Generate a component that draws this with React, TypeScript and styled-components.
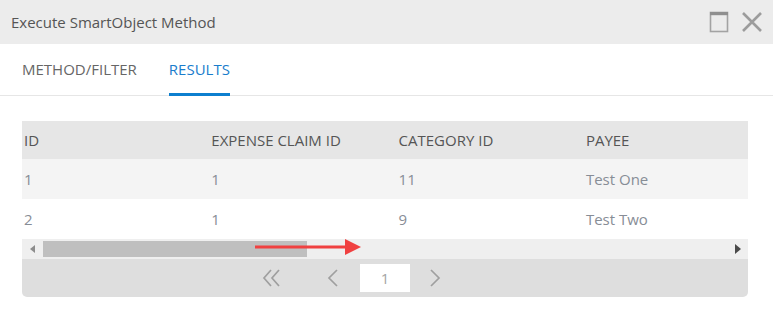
import React, { useState } from "react";
import styled, { createGlobalStyle } from "styled-components";

interface Column {
  key: string;
  title: string;
}

const columns: Column[] = [
  { key: "id", title: "ID" },
  { key: "claimId", title: "EXPENSE CLAIM ID" },
  { key: "categoryId", title: "CATEGORY ID" },
  { key: "payee", title: "PAYEE" },
];

const rows: Record<string, string>[] = [
  { id: "1", claimId: "1", categoryId: "11", payee: "Test One" },
  { id: "2", claimId: "1", categoryId: "9", payee: "Test Two" },
];

const tabs = ["METHOD/FILTER", "RESULTS"];

function App() {
  const [activeTab, setActiveTab] = useState(1);

  return (
    <>
      <GlobalStyle />
      <Dialog>
        <TitleBar>
          <Title>Execute SmartObject Method</Title>
          <TitleButtons>
            <IconButton aria-label="maximize">
              <svg width="20" height="22" viewBox="0 0 20 22">
                <rect x="1.5" y="1.5" width="17" height="19" fill="none" stroke="#a3a3a3" strokeWidth="1.6" />
                <rect x="1" y="1" width="18" height="3.2" fill="#8f8f8f" />
              </svg>
            </IconButton>
            <IconButton aria-label="close">
              <svg width="22" height="20" viewBox="0 0 22 20">
                <path d="M2 1 L20 19 M20 1 L2 19" stroke="#9c9c9c" strokeWidth="2.6" />
              </svg>
            </IconButton>
          </TitleButtons>
        </TitleBar>

        <TabBar>
          {tabs.map((tab, index) => (
            <Tab key={tab} $active={activeTab === index} onClick={() => setActiveTab(index)}>
              {tab}
            </Tab>
          ))}
        </TabBar>

        <Content>
          <Grid>
            <TableViewport>
              <Table>
                <thead>
                  <tr>
                    {columns.map((col) => (
                      <HeadCell key={col.key}>{col.title}</HeadCell>
                    ))}
                  </tr>
                </thead>
                <tbody>
                  {rows.map((row, index) => (
                    <BodyRow key={index} $striped={index % 2 === 0}>
                      {columns.map((col) => (
                        <BodyCell key={col.key}>{row[col.key]}</BodyCell>
                      ))}
                    </BodyRow>
                  ))}
                </tbody>
              </Table>
            </TableViewport>

            <ScrollBar>
              <ScrollArrow>
                <svg width="6" height="8" viewBox="0 0 6 8">
                  <path d="M5 0 L0 4 L5 8 Z" fill="#8c8c8c" />
                </svg>
              </ScrollArrow>
              <Track>
                <Thumb style={{ width: "38.6%" }} />
                <Annotation>
                  <svg width="106" height="16" viewBox="0 0 106 16">
                    <rect x="0" y="6.5" width="92" height="3" fill="#f04141" />
                    <path d="M90 0 L106 8 L90 16 Z" fill="#f04141" />
                  </svg>
                </Annotation>
              </Track>
              <ScrollArrow>
                <svg width="6" height="10" viewBox="0 0 6 10">
                  <path d="M0 0 L6 5 L0 10 Z" fill="#4a4a4a" />
                </svg>
              </ScrollArrow>
            </ScrollBar>

            <Pager>
              <PagerButton $width={20} $gap={45} aria-label="first page">
                <svg width="20" height="18" viewBox="0 0 20 18">
                  <path d="M9 1 L2 9 L9 17 M17 1 L10 9 L17 17" fill="none" stroke="#9f9f9f" strokeWidth="1.7" />
                </svg>
              </PagerButton>
              <PagerButton $width={11} $gap={22} aria-label="previous page">
                <svg width="11" height="18" viewBox="0 0 11 18">
                  <path d="M10 1 L2 9 L10 17" fill="none" stroke="#9f9f9f" strokeWidth="1.7" />
                </svg>
              </PagerButton>
              <PageInput value="1" readOnly />
              <PagerButton $width={11} $gap={47} aria-label="next page">
                <svg width="11" height="18" viewBox="0 0 11 18">
                  <path d="M1 1 L9 9 L1 17" fill="none" stroke="#9f9f9f" strokeWidth="1.7" />
                </svg>
              </PagerButton>
              <PagerButton $width={20} $gap={0} $hidden aria-label="last page">
                <svg width="20" height="18" viewBox="0 0 20 18">
                  <path d="M3 1 L10 9 L3 17 M11 1 L18 9 L11 17" fill="none" stroke="#9f9f9f" strokeWidth="1.7" />
                </svg>
              </PagerButton>
            </Pager>
          </Grid>
        </Content>
      </Dialog>
    </>
  );
}

const GlobalStyle = createGlobalStyle`
  body {
    margin: 0;
    background: #ffffff;
    font-family: "Open Sans", "Liberation Sans", sans-serif;
  }
`;

const Dialog = styled.div`
  width: 773px;
  height: 320px;
  background: #fff;
  overflow: hidden;
`;

const TitleBar = styled.div`
  height: 44px;
  background: #ececec;
  display: flex;
  align-items: center;
  justify-content: space-between;
  padding: 0 10px 0 11px;
  box-sizing: border-box;
`;

const Title = styled.div`
  font-size: 15px;
  color: #555;
`;

const TitleButtons = styled.div`
  display: flex;
  align-items: center;
  gap: 12px;
`;

const IconButton = styled.button`
  border: none;
  background: none;
  padding: 0;
  display: flex;
  cursor: pointer;
`;

const TabBar = styled.div`
  height: 52px;
  display: flex;
  padding-left: 22px;
  gap: 32px;
  border-bottom: 1px solid #e6e6e6;
  box-sizing: border-box;
`;

const Tab = styled.div<{ $active: boolean }>`
  font-size: 15px;
  color: ${(p) => (p.$active ? "#1a7dcc" : "#666")};
  display: flex;
  align-items: center;
  padding-top: 1px;
  box-sizing: border-box;
  border-bottom: 3px solid ${(p) => (p.$active ? "#0d7fcf" : "transparent")};
  margin-bottom: -1px;
  cursor: pointer;
`;

const Content = styled.div`
  padding: 25px 25px 0 22px;
`;

const Grid = styled.div`
  width: 726px;
  border-radius: 0 0 5px 5px;
  overflow: hidden;
`;

const TableViewport = styled.div`
  overflow: hidden;
`;

const Table = styled.table`
  border-collapse: collapse;
  table-layout: fixed;
  width: 749px;
`;

const HeadCell = styled.th`
  width: 185.3px;
  height: 38px;
  padding: 0 0 0 2px;
  background: #e6e6e6;
  color: #555;
  font-size: 15px;
  font-weight: 400;
  text-align: left;
  white-space: nowrap;
`;

const BodyRow = styled.tr<{ $striped: boolean }>`
  background: ${(p) => (p.$striped ? "#f4f4f4" : "#fff")};
`;

const BodyCell = styled.td`
  height: 40px;
  padding: 0 0 0 2px;
  color: #878d96;
  font-size: 15px;
  white-space: nowrap;
`;

const ScrollBar = styled.div`
  height: 20px;
  display: flex;
  background: #efefef;
`;

const ScrollArrow = styled.div`
  width: 21px;
  display: flex;
  align-items: center;
  justify-content: center;
`;

const Track = styled.div`
  flex: 1;
  position: relative;
  display: flex;
  align-items: center;
`;

const Thumb = styled.div`
  height: 16px;
  background: #bfbfbf;
`;

const Annotation = styled.div`
  position: absolute;
  left: 212px;
  top: 0;
  display: flex;
`;

const Pager = styled.div`
  height: 38px;
  background: #dedede;
  display: flex;
  align-items: center;
  justify-content: center;
`;

const PagerButton = styled.button<{ $width: number; $gap: number; $hidden?: boolean }>`
  width: ${(p) => p.$width}px;
  margin-right: ${(p) => p.$gap}px;
  padding: 0;
  border: none;
  background: none;
  display: flex;
  justify-content: center;
  visibility: ${(p) => (p.$hidden ? "hidden" : "visible")};
  cursor: pointer;
`;

const PageInput = styled.input`
  width: 50px;
  height: 28px;
  box-sizing: border-box;
  border: none;
  background: #fff;
  margin-right: 20px;
  text-align: center;
  font-family: "Open Sans", "Liberation Sans", sans-serif;
  font-size: 15px;
  color: #a5a5a5;
  outline: none;
`;

export default App;
